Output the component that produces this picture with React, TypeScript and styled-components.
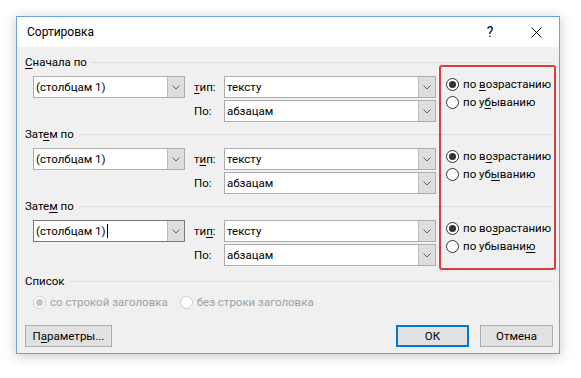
import React from 'react';
import styled, { createGlobalStyle } from 'styled-components';

const GlobalStyle = createGlobalStyle`
  html, body {
    margin: 0;
    padding: 0;
    background: #ffffff;
  }
  body {
    font-family: Roboto, "Noto Sans", sans-serif;
    font-size: 11.5px;
    color: #000;
  }
`;

const Page = styled.div`
  width: 581px;
  height: 378px;
  box-sizing: border-box;
  padding: 16px 0 0 16px;
`;

const Dialog = styled.div`
  position: relative;
  width: 544px;
  height: 338px;
  box-sizing: border-box;
  border: 1px solid #6aa3dc;
  background: #f0f0f0;
  box-shadow: 0 2px 12px rgba(0, 0, 0, 0.22);
  display: flex;
  flex-direction: column;
`;

const TitleBar = styled.div`
  height: 30px;
  background: #fff;
  display: flex;
  align-items: center;
`;

const Title = styled.div`
  flex: 1;
  padding-left: 10px;
  font-size: 12px;
`;

const CaptionButton = styled.div`
  width: 46px;
  height: 30px;
  display: flex;
  align-items: center;
  justify-content: center;
  font-size: 14px;
`;

const Body = styled.div`
  flex: 1;
  display: flex;
  flex-direction: column;
  padding: 8px 6px 6px 8px;
`;

const GroupTitle = styled.div<{ gap?: number }>`
  height: 14px;
  display: flex;
  align-items: center;
  gap: 5px;
  margin-top: ${p => p.gap ?? 0}px;
  white-space: nowrap;
  &::after {
    content: '';
    flex: 1;
    height: 1px;
    background: #dcdcdc;
  }
`;

const GroupBody = styled.div`
  display: grid;
  grid-template-columns: 152px 39px 212px 1fr;
  grid-template-rows: 22px 22px;
  row-gap: 2px;
  padding-left: 8px;
  margin-top: 7px;
`;

const FieldLabel = styled.div<{ row: number }>`
  grid-column: 2;
  grid-row: ${p => p.row};
  padding-left: 9px;
  display: flex;
  align-items: center;
`;

const Combo = styled.div<{ col: number; row: number; focused?: boolean }>`
  grid-column: ${p => p.col};
  grid-row: ${p => p.row};
  display: flex;
  box-sizing: border-box;
  border: 1px solid ${p => (p.focused ? '#7a7a7a' : '#adadad')};
  background: #fff;
`;

const ComboText = styled.div`
  flex: 1;
  display: flex;
  align-items: center;
  padding-left: 2px;
  white-space: nowrap;
`;

const Caret = styled.span`
  display: inline-block;
  width: 1px;
  height: 14px;
  background: #000;
  margin-left: 1px;
`;

const DropButton = styled.div`
  width: 16px;
  background: #dedede;
  border-left: 1px solid #bcbcbc;
  display: flex;
  align-items: center;
  justify-content: center;
`;

const RadioList = styled.div`
  grid-column: 4;
  grid-row: 1 / 3;
  padding-left: 10px;
  margin-top: -1px;
  display: flex;
  flex-direction: column;
`;

const RadioRow = styled.div<{ disabled?: boolean }>`
  height: 18px;
  display: flex;
  align-items: center;
  gap: 4px;
  white-space: nowrap;
  color: ${p => (p.disabled ? '#a0a0a0' : '#000')};
`;

const Circle = styled.span<{ checked?: boolean; disabled?: boolean }>`
  width: 13px;
  height: 13px;
  box-sizing: border-box;
  border-radius: 50%;
  border: 1px solid ${p => (p.disabled ? '#cccccc' : '#333')};
  background: #fff;
  display: flex;
  align-items: center;
  justify-content: center;
  flex-shrink: 0;
  &::after {
    content: '';
    width: 7px;
    height: 7px;
    border-radius: 50%;
    background: ${p => (p.checked ? (p.disabled ? '#c4c4c4' : '#333') : 'transparent')};
  }
`;

const OptionsRow = styled.div`
  display: flex;
  padding-left: 8px;
  margin-top: 5px;
  gap: 12px;
`;

const Footer = styled.div`
  margin-top: auto;
  display: flex;
  align-items: center;
`;

const Button = styled.button<{ width: number; primary?: boolean }>`
  width: ${p => p.width}px;
  height: 22px;
  box-sizing: border-box;
  font: inherit;
  color: #000;
  background: #e1e1e1;
  border: ${p => (p.primary ? '2px solid #0078d7' : '1px solid #adadad')};
  padding: 0;
  margin-left: ${p => (p.primary ? 'auto' : '0')};
`;

const CancelButton = styled(Button)`
  margin-left: 11px;
`;

const U = styled.span`
  text-decoration: underline;
  text-underline-offset: 2px;
`;

const RedFrame = styled.div`
  position: absolute;
  left: 422px;
  top: 48px;
  width: 117px;
  height: 205px;
  box-sizing: border-box;
  border: 2px solid #dc3b3f;
  border-radius: 3px;
  pointer-events: none;
`;

const Chevron = () => (
  <svg width="8" height="5" viewBox="0 0 8 5">
    <path d="M0.5 0.5 L4 4 L7.5 0.5" fill="none" stroke="#606060" strokeWidth="1" />
  </svg>
);

const CloseIcon = () => (
  <svg width="11" height="11" viewBox="0 0 11 11">
    <path d="M0.5 0.5 L10.5 10.5 M10.5 0.5 L0.5 10.5" stroke="#000" strokeWidth="1" />
  </svg>
);

interface SortGroup {
  title: React.ReactNode;
  typeLabel: React.ReactNode;
  asc: React.ReactNode;
  desc: React.ReactNode;
  focused?: boolean;
}

const groups: SortGroup[] = [
  {
    title: <><U>С</U>начала по</>,
    typeLabel: <><U>т</U>ип:</>,
    asc: <>по <U>в</U>озрастанию</>,
    desc: <>по у<U>б</U>ыванию</>,
  },
  {
    title: <>Зат<U>е</U>м по</>,
    typeLabel: <>т<U>и</U>п:</>,
    asc: <>по в<U>о</U>зрастанию</>,
    desc: <>по уб<U>ы</U>ванию</>,
  },
  {
    title: <>Зате<U>м</U> по</>,
    typeLabel: <>ти<U>п</U>:</>,
    asc: <>по во<U>з</U>растанию</>,
    desc: <>по убывани<U>ю</U></>,
    focused: true,
  },
];

const ComboBox: React.FC<{ col: number; row: number; value: string; focused?: boolean }> = ({ col, row, value, focused }) => (
  <Combo col={col} row={row} focused={focused}>
    <ComboText>
      {value}
      {focused && <Caret />}
    </ComboText>
    <DropButton>
      <Chevron />
    </DropButton>
  </Combo>
);

export default function App() {
  return (
    <Page>
      <GlobalStyle />
      <Dialog>
        <TitleBar>
          <Title>Сортировка</Title>
          <CaptionButton>?</CaptionButton>
          <CaptionButton>
            <CloseIcon />
          </CaptionButton>
        </TitleBar>
        <Body>
          {groups.map((g, i) => (
            <React.Fragment key={i}>
              <GroupTitle gap={i === 0 ? 0 : 5}>
                <span>{g.title}</span>
              </GroupTitle>
              <GroupBody>
                <ComboBox col={1} row={1} value="(столбцам 1)" focused={g.focused} />
                <FieldLabel row={1}>
                  <span>{g.typeLabel}</span>
                </FieldLabel>
                <ComboBox col={3} row={1} value="тексту" />
                <FieldLabel row={2}>По:</FieldLabel>
                <ComboBox col={3} row={2} value="абзацам" />
                <RadioList>
                  <RadioRow>
                    <Circle checked />
                    <span>{g.asc}</span>
                  </RadioRow>
                  <RadioRow>
                    <Circle />
                    <span>{g.desc}</span>
                  </RadioRow>
                </RadioList>
              </GroupBody>
            </React.Fragment>
          ))}
          <GroupTitle gap={8}>
            <span>Список</span>
          </GroupTitle>
          <OptionsRow>
            <RadioRow disabled>
              <Circle checked disabled />
              <span>со строкой заголовка</span>
            </RadioRow>
            <RadioRow disabled>
              <Circle disabled />
              <span>без строки заголовка</span>
            </RadioRow>
          </OptionsRow>
          <Footer>
            <Button width={87}>
              П<U>а</U>раметры...
            </Button>
            <Button width={73} primary>
              ОК
            </Button>
            <CancelButton width={73}>Отмена</CancelButton>
          </Footer>
        </Body>
        <RedFrame />
      </Dialog>
    </Page>
  );
}
